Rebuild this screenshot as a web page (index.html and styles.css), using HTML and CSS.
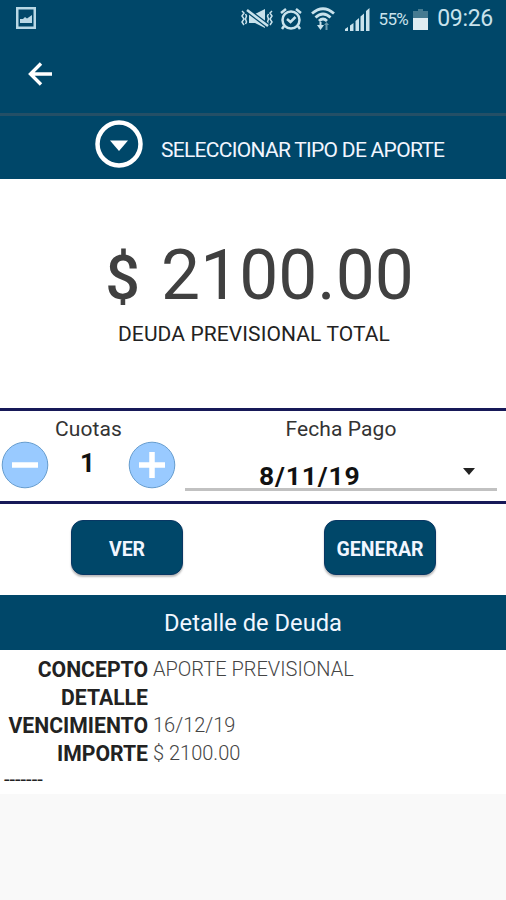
FILE: index.html
```html
<!DOCTYPE html>
<html lang="es">
<head>
<meta charset="utf-8">
<title>Detalle de Deuda</title>
<link rel="stylesheet" href="styles.css">
</head>
<body>
<header class="status">
  <svg class="status-photo" width="20" height="22" viewBox="0 0 20 22"><rect x="1.250" y="1.250" width="17.500" height="19.500" fill="none" stroke="#b9d8e5" stroke-width="2.500"/><path d="M4 16v-4l3 0 2-2 2 1.500 5-3.500v8z" fill="#b9d8e5"/></svg>
  <div class="status-icons">
    <svg width="34" height="22" viewBox="0 0 34 22" fill="none" stroke="#c9e2ec" stroke-width="1.500"><path d="M2 3l2 2-2 3 2 3-2 3 2 3M5.500 6l1 2-1 3 1 3-1 2M32 3l-2 2 2 3-2 3 2 3-2 3M28.500 6l-1 2 1 3-1 3 1 2"/><path d="M9 6h6l10-5v19l-10-5H9z" fill="#c9e2ec" stroke="none"/><path d="M7 2l21 16" stroke="#004769" stroke-width="5"/><path d="M7 2l21 16" stroke-width="2.500"/></svg>
    <svg width="22" height="22" viewBox="0 0 22 22" fill="none" stroke="#c9e2ec" stroke-width="2.500"><circle cx="11" cy="12" r="8.500"/><path d="M7 11l3.500 3 5-5M1 5l5-4M21 5l-5-4M4 18l-2 3M18 18l2 3"/></svg>
    <svg width="24" height="24" viewBox="0 0 24 24" fill="none" stroke="#c9e2ec" stroke-width="2.800"><path d="M1 6.500q11-9.500 22 0M4.500 10.500q7.500-7 15 0M8 14q4-4 8 0"/><path d="M9.500 15v5" stroke-width="2"/><path d="M6 18h7l-3.500 5z" fill="#c9e2ec" stroke="none"/><path d="M15.500 23v-5" stroke="#6b9bae" stroke-width="2"/><path d="M13 18h5l-2.500-3z" fill="#6b9bae" stroke="none"/></svg>
    <svg width="25" height="23" viewBox="0 0 25 23" fill="#c9e2ec"><path d="M0 21l3-2v4H0zM5 17.500l3.500-2.500v8H5zM10.500 13l3.500-3v13h-3.500zM15.500 8.500l3.500-3V23h-3.500zM21 3l3.500-3v23H21z"/></svg>
    <span class="battery-text">55%</span>
    <svg width="15" height="21" viewBox="0 0 15 21"><path d="M5 0h5v2h5v8H0V2h5z" fill="#457b91"/><path d="M0 9h15v12H0z" fill="#dfedf2"/></svg>
    <span class="clock">09:26</span>
  </div>
</header>
<nav class="toolbar">
  <svg width="24" height="24" viewBox="0 0 24 24" fill="none" stroke="#fff" stroke-width="3.400"><path d="M24 12H3M13 1.500L2.500 12 13 22.500"/></svg>
</nav>
<div class="selector">
  <svg width="48" height="48" viewBox="0 0 48 48"><circle cx="24" cy="24" r="21.500" fill="none" stroke="#fff" stroke-width="4.500"/><path d="M15 20.500h18L24 31z" fill="#fff"/></svg>
  <span>SELECCIONAR TIPO DE APORTE</span>
</div>
<main>
  <section class="total">
    <div class="amount"><span class="currency">$</span> 2100.00</div>
    <div class="caption">DEUDA PREVISIONAL TOTAL</div>
  </section>
  <section class="plan">
    <div class="quotas">
      <div class="label">Cuotas</div>
      <div class="stepper">
        <svg width="48" height="48" viewBox="0 0 48 48"><circle cx="24" cy="24" r="22.800" fill="#99caff" stroke="#659cce"/><path d="M11 24h26" stroke="#fff" stroke-width="5.500"/></svg>
        <b>1</b>
        <svg width="48" height="48" viewBox="0 0 48 48"><circle cx="24" cy="24" r="22.800" fill="#99caff" stroke="#659cce"/><path d="M11 24h26M24 11v26" stroke="#fff" stroke-width="5.500"/></svg>
      </div>
    </div>
    <div class="payment">
      <div class="label">Fecha Pago</div>
      <div class="date"><b>8/11/19</b><svg width="12" height="8" viewBox="0 0 12 8"><path d="M0 0h12L6 7z" fill="#222"/></svg></div>
    </div>
  </section>
  <section class="actions">
    <button class="button">VER</button>
    <button class="button">GENERAR</button>
  </section>
  <h2 class="heading">Detalle de Deuda</h2>
  <section class="details">
    <dl>
      <dt>CONCEPTO</dt><dd>APORTE PREVISIONAL</dd>
      <dt>DETALLE</dt><dd></dd>
      <dt>VENCIMIENTO</dt><dd>16/12/19</dd>
      <dt>IMPORTE</dt><dd>$ 2100.00</dd>
    </dl>
    <div class="dashes">-------</div>
  </section>
</main>
</body>
</html>
```
FILE: styles.css
```css
* { box-sizing: border-box; }
body { margin: 0; height: 900px; background: #f9f9f9; font-family: Roboto, sans-serif; color: #222; overflow: hidden; }
svg { display: block; flex: none; }
.status { height: 38px; background: #004769; display: flex; justify-content: space-between; align-items: flex-start; padding: 7px 13px 0 16px; }
.status-icons { display: flex; align-items: center; height: 24px; color: #c9e2ec; }
.status-icons svg:nth-of-type(1) { margin-right: 6px; }
.status-icons svg:nth-of-type(2) { margin-right: 9px; }
.status-icons svg:nth-of-type(3) { margin-right: 10px; }
.status-icons svg:nth-of-type(4) { margin-right: 8px; }
.battery-text { font-size: 17px; letter-spacing: -.6px; margin-right: 5px; }
.clock { font-size: 23px; line-height: 26px; margin-left: 9px; letter-spacing: -.3px; }
.toolbar { height: 75px; padding: 24px 28px; background: #004769; }
.selector { height: 66px; border-top: 3px solid #244f66; background: #004769; display: flex; padding: 4px 0 0 95px; gap: 18px; color: #f1f6ff; font-size: 21px; white-space: nowrap; letter-spacing: -.71px; }
.selector span { line-height: 60px; }
main { background: #fff; height: 615px; }
.total { height: 229px; padding-top: 57px; text-align: center; }
.amount { font-size: 69.5px; line-height: 80px; color: #404040; padding-left: 13px; }
.currency { font-size: 61px; font-weight: 500; line-height: 1; margin-right: 4px; }
.caption { font-size: 21px; line-height: 28px; margin-top: 4px; letter-spacing: .1px; padding-left: 2px; }
.plan { height: 96px; border: solid #171958; border-width: 3px 0; display: flex; }
.label { font-size: 21px; line-height: 25px; padding-top: 6px; height: 30px; text-align: center; color: #333; letter-spacing: .1px; }
.quotas { width: 177px; }
.stepper { display: flex; justify-content: space-between; padding: 0 1px; }
.stepper b { font-size: 26px; line-height: 44px; color: #111; transform: translateX(-1px); }
.payment { width: 312px; margin-left: 8px; }
.date { height: 50px; border-bottom: 3px solid #c1c1c1; display: flex; justify-content: space-between; padding: 0 22px 0 74px; }
.date b { font-size: 26.5px; line-height: 70px; height: 47px; letter-spacing: .85px; color: #111; }
.date svg { margin-top: 27px; }
.actions { height: 91px; padding: 16px 70px 0 71px; display: flex; justify-content: space-between; }
.button { width: 112px; height: 55px; padding: 3px 0 0; border: 1px solid #083764; border-radius: 12px; background: #004769; color: #f1f6ff; font: 700 19.5px Roboto, sans-serif; box-shadow: 0 2px 2px #bbb; }
.heading { height: 55px; margin: 0; background: #004769; color: #f1f6ff; font-size: 23.7px; font-weight: 400; line-height: 57px; text-align: center; }
.details { padding-top: 5px; }
dl { margin: 0; display: grid; grid-template-columns: 148px 1fr; column-gap: 5px; grid-auto-rows: 28px; line-height: 28px; }
dt { font-size: 21.2px; font-weight: 700; text-align: right; line-height: 30px; }
dd { font-size: 20px; margin: 0; color: #444; font-weight: 300; }
.dashes { padding-left: 4px; font-size: 20px; line-height: 24px; }
```
